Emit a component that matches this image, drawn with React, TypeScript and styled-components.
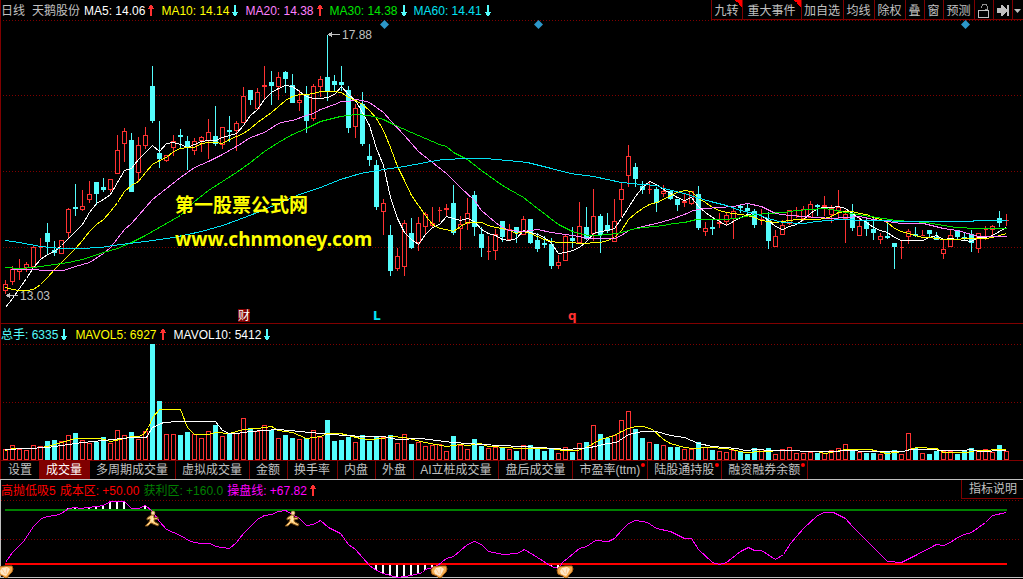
import React from "react";
import styled, { createGlobalStyle } from "styled-components";

const color = {
  line: "#800000",
  up: "#ff3232",
  down: "#54fcfc",
  text: "#c0c0c0",
  white: "#ffffff",
  yellow: "#ffff00",
  pink: "#ff80ff",
  green: "#00e600",
  sky: "#02e2f4",
  magenta: "#ff00ff",
  red: "#ff0000",
  darkGreen: "#008000",
  diamond: "#2c96c8",
};

const GlobalStyle = createGlobalStyle`
  *, *::before, *::after { box-sizing: border-box; }
  body {
    margin: 0;
    background: #000;
    color: ${color.text};
    font: 12px/20px "Liberation Sans", "Noto Sans CJK SC", sans-serif;
  }
`;

/* ---------- price data: [direction, high, low, body top, body bottom] ---------- */

type Candle = ["u" | "d", number, number, number, number];

const candles: Candle[] = [
  ["u", 280, 294, 284, 290], ["u", 266, 285, 269, 281], ["u", 259, 280, 269, 271], ["u", 262, 272, 264, 267],
  ["u", 245, 266, 247, 266], ["u", 238, 258, 247, 247], ["d", 223, 254, 233, 242], ["d", 241, 256, 250, 253],
  ["u", 240, 253, 240, 253], ["u", 208, 239, 209, 232], ["d", 184, 216, 207, 209], ["u", 190, 211, 206, 209],
  ["u", 181, 203, 194, 199], ["d", 182, 205, 182, 194], ["d", 178, 192, 187, 190], ["u", 179, 192, 179, 189],
  ["u", 135, 174, 150, 173], ["u", 128, 162, 131, 143], ["d", 133, 192, 140, 192], ["u", 137, 182, 145, 172],
  ["u", 127, 149, 135, 145], ["d", 66, 123, 86, 121], ["d", 121, 168, 153, 159], ["u", 155, 162, 155, 160],
  ["u", 135, 156, 141, 147], ["d", 129, 148, 135, 137], ["d", 136, 170, 141, 147], ["u", 138, 155, 141, 150],
  ["u", 136, 152, 137, 140], ["u", 119, 159, 132, 140], ["d", 106, 146, 136, 144], ["u", 127, 149, 127, 144],
  ["d", 116, 142, 130, 132], ["u", 121, 151, 123, 130], ["u", 87, 122, 96, 122], ["d", 90, 105, 90, 100],
  ["u", 88, 109, 92, 108], ["u", 66, 100, 85, 86], ["d", 71, 105, 82, 86], ["u", 72, 100, 77, 86],
  ["d", 71, 93, 72, 79], ["d", 74, 103, 85, 103], ["u", 90, 111, 100, 102], ["d", 86, 133, 95, 121],
  ["u", 84, 121, 86, 118], ["u", 76, 97, 79, 86], ["d", 35, 101, 77, 92], ["d", 75, 91, 81, 85],
  ["d", 66, 91, 82, 85], ["d", 86, 133, 90, 128], ["u", 104, 138, 108, 126], ["d", 92, 146, 104, 144],
  ["d", 144, 166, 156, 160], ["d", 160, 210, 165, 207], ["u", 199, 235, 203, 211], ["d", 225, 276, 235, 271],
  ["u", 248, 271, 256, 268], ["u", 220, 276, 223, 266], ["d", 218, 249, 233, 248], ["u", 217, 251, 223, 242],
  ["u", 212, 235, 214, 226], ["u", 207, 227, 223, 225], ["u", 207, 222, 210, 210], ["u", 204, 217, 208, 209],
  ["d", 185, 235, 203, 233], ["u", 216, 250, 224, 228], ["u", 198, 230, 213, 223], ["d", 191, 236, 195, 227],
  ["d", 227, 257, 234, 248], ["u", 236, 260, 251, 251], ["u", 229, 260, 234, 250], ["d", 221, 242, 221, 237],
  ["u", 224, 240, 229, 239], ["d", 227, 243, 227, 233], ["u", 216, 235, 219, 234], ["d", 219, 244, 219, 243],
  ["d", 233, 252, 240, 249], ["d", 236, 248, 243, 245], ["d", 238, 269, 244, 266], ["u", 255, 269, 262, 265],
  ["u", 234, 261, 236, 260], ["d", 227, 248, 238, 241], ["u", 202, 242, 226, 242], ["d", 207, 240, 227, 239],
  ["u", 189, 241, 216, 233], ["d", 214, 253, 216, 235], ["d", 213, 233, 225, 231], ["u", 199, 242, 221, 241],
  ["u", 183, 217, 189, 199], ["u", 145, 187, 156, 175], ["d", 163, 187, 167, 179], ["d", 181, 194, 186, 190],
  ["u", 181, 194, 189, 189], ["d", 187, 212, 189, 203], ["u", 185, 197, 191, 193], ["d", 190, 200, 191, 199],
  ["d", 199, 211, 199, 205], ["u", 193, 207, 201, 202], ["u", 191, 205, 191, 203], ["d", 186, 230, 194, 228],
  ["u", 222, 236, 228, 231], ["d", 220, 235, 227, 229], ["u", 213, 228, 222, 223], ["u", 212, 225, 215, 221],
  ["u", 207, 239, 211, 218], ["d", 205, 213, 206, 208], ["d", 204, 215, 208, 211], ["d", 209, 228, 211, 225],
  ["u", 209, 225, 219, 219], ["d", 212, 249, 220, 241], ["u", 230, 247, 236, 246], ["u", 220, 235, 225, 234],
  ["u", 210, 225, 210, 223], ["u", 207, 218, 215, 215], ["u", 206, 221, 209, 218], ["u", 201, 218, 204, 217],
  ["d", 204, 216, 205, 207], ["u", 196, 216, 205, 206], ["u", 205, 223, 208, 214], ["u", 190, 220, 207, 210],
  ["u", 210, 243, 214, 218], ["d", 204, 231, 213, 228], ["u", 217, 236, 226, 235], ["d", 219, 236, 222, 229],
  ["d", 217, 240, 229, 233], ["u", 233, 244, 236, 239], ["d", 222, 239, 236, 238], ["d", 243, 269, 243, 247],
  ["u", 240, 259, 247, 247], ["u", 229, 244, 231, 236], ["d", 227, 237, 234, 236], ["u", 230, 236, 235, 235],
  ["d", 230, 237, 230, 234], ["d", 232, 240, 237, 240], ["u", 239, 259, 249, 253], ["u", 230, 247, 235, 246],
  ["d", 230, 239, 230, 237], ["d", 233, 241, 237, 239], ["d", 230, 252, 234, 243], ["u", 233, 253, 233, 248],
  ["u", 226, 240, 229, 229], ["u", 225, 235, 226, 229], ["d", 211, 227, 218, 223], ["u", 214, 226, 220, 220],
];

const volumeTops = [
  449, 445, 449, 450, 445, 446, 441, 440, 441, 435, 433, 440, 443, 442, 437, 443, 430, 435, 432, 439, 431, 344, 401, 434,
  434, 435, 432, 434, 438, 431, 425, 436, 433, 433, 418, 428, 431, 425, 430, 438, 435, 438, 439, 438, 430, 437, 420, 441,
  440, 437, 442, 435, 441, 437, 437, 435, 443, 434, 444, 442, 446, 445, 444, 451, 436, 445, 449, 439, 446, 448, 447, 448,
  449, 451, 445, 445, 448, 451, 449, 453, 447, 452, 443, 442, 425, 434, 438, 435, 420, 411, 429, 438, 442, 444, 445, 447,
  447, 449, 449, 442, 447, 450, 451, 452, 450, 452, 454, 448, 449, 448, 454, 449, 447, 453, 453, 452, 453, 453, 450, 448,
  444, 449, 452, 453, 453, 454, 452, 450, 454, 433, 448, 453, 454, 451, 451, 451, 454, 451, 448, 450, 449, 452, 445, 451,
];

const ma5 = [
  307, 298, 288, 278, 267, 259, 254, 251, 245, 238, 231, 224, 212, 203, 199, 194, 182, 170, 168, 159, 152, 145, 151, 143,
  142, 144, 147, 144, 141, 140, 140, 137, 135, 133, 125, 115, 109, 99, 92, 88, 85, 86, 91, 96, 98, 98, 97, 94,
  86, 94, 100, 112, 125, 148, 165, 197, 218, 232, 239, 244, 234, 227, 224, 216, 218, 220, 218, 221, 229, 233, 235, 239,
  240, 238, 230, 232, 234, 237, 243, 253, 252, 250, 247, 241, 233, 231, 230, 228, 218, 207, 196, 187, 181, 184, 189, 193,
  197, 200, 197, 206, 212, 217, 221, 225, 221, 217, 214, 213, 215, 220, 226, 229, 226, 224, 219, 213, 208, 207, 207, 206,
  208, 213, 218, 222, 227, 230, 232, 237, 240, 240, 240, 240, 237, 235, 239, 238, 239, 240, 241, 237, 237, 235, 231, 227,
];

const ma10 = [
  287, 289, 290, 290, 289, 284, 277, 269, 262, 255, 248, 240, 231, 224, 219, 211, 202, 191, 185, 181, 172, 164, 160, 157,
  151, 148, 147, 147, 143, 142, 142, 143, 139, 136, 133, 128, 122, 117, 112, 106, 100, 96, 94, 94, 93, 91, 91, 91,
  92, 97, 100, 104, 110, 118, 130, 147, 166, 180, 195, 205, 215, 224, 228, 229, 231, 226, 222, 222, 222, 225, 227, 228,
  230, 233, 231, 233, 236, 239, 241, 242, 242, 242, 243, 243, 242, 242, 240, 237, 230, 219, 213, 208, 204, 202, 199, 195,
  192, 190, 191, 198, 202, 207, 210, 212, 213, 214, 215, 217, 220, 221, 222, 221, 220, 219, 219, 219, 219, 218, 216, 212,
  211, 211, 213, 214, 217, 219, 222, 228, 231, 233, 235, 237, 237, 238, 239, 239, 239, 238, 238, 238, 238, 237, 235, 233,
];

const ma20 =
  "10,269 33,269 43,270 63,270 75,266 89,262 103,253 110,247 117,238 124,229 131,223 138,215 145,207 152,199 166,188 180,177 194,167 208,161 222,154 236,146 250,137 264,132 278,123 285,121 292,120 306,115 313,113 320,109 334,104 341,101 348,101 355,99 362,100 369,102 376,107 383,112 390,120 404,135 418,151 432,162 446,173 460,187 474,200 481,210 495,222 502,227 509,230 523,231 537,229 551,232 565,234 579,236 586,238 614,238 621,235 628,230 635,228 642,226 656,223 670,219 684,214 693,210 705,208 719,207 733,206 747,203 761,206 775,213 789,215 803,216 817,217 831,218 845,217 859,216 873,219 887,221 901,223 923,223 943,228 957,230 971,234 978,236 1006,236";
const ma30 =
  "5,267 19,268 33,267 47,265 68,262 82,259 103,252 117,248 131,242 145,235 159,227 173,219 180,215 194,201 208,190 222,181 236,172 250,162 264,151 278,142 292,134 306,128 320,121 340,116 355,114 369,115 376,117 383,119 393,124 411,132 425,138 439,144 446,146 453,152 467,159 481,170 502,185 523,197 537,208 558,224 572,231 587,235 597,235 617,233 628,230 635,228 663,225 673,223 684,222 696,219 723,219 736,218 750,215 766,213 783,212 796,210 824,208 831,209 845,212 870,216 896,220 926,222 943,225 956,227 976,228 1006,228";
const ma60 =
  "5,240 19,242 40,246 61,248 80,248 100,247 120,244 145,241 173,237 187,234 201,231 222,225 236,220 257,212 278,203 299,194 320,187 340,179 360,173 383,169 404,166 425,162 443,159 467,158 485,158 507,160 527,162 547,167 570,173 593,176 621,182 642,184 656,185 663,188 684,193 696,197 710,201 726,205 740,210 754,213 768,218 782,222 803,223 816,221 840,219 866,220 916,221 970,221 976,220 1006,220";

const mavol5 =
  "5,450 12,448 33,448 47,446 61,442 75,438 100,438 110,441 124,438 131,436 138,436 143,434 148,427 152,417 159,409 180,409 187,427 194,434 208,434 215,432 229,433 243,429 257,428 271,426 278,430 292,432 306,438 320,436 327,433 340,433 360,438 369,439 383,438 390,436 404,437 425,442 446,446 460,444 467,445 480,443 488,446 509,447 516,448 551,448 563,450 577,450 586,447 593,443 600,439 607,437 614,435 621,431 628,428 635,426 643,426 652,429 663,439 670,443 684,447 693,448 708,447 726,448 745,452 763,451 783,450 816,451 825,453 845,449 870,449 886,453 903,451 916,447 936,448 943,452 966,452 976,450 1006,449";
const mavol10 =
  "5,449 47,447 61,445 82,442 103,440 131,437 146,437 152,427 163,422 178,421 215,421 222,430 229,433 236,433 250,431 278,429 310,432 330,434 362,436 370,436 383,436 397,439 420,438 453,442 481,444 540,447 567,449 590,447 607,443 616,442 628,434 642,431 656,431 670,435 684,437 698,443 712,446 736,448 745,450 756,449 770,450 796,450 803,451 831,451 848,450 866,451 903,451 910,449 962,450 971,449 978,451 1006,450";

const operation =
  "5,562 12,552 23,541 33,526 41,518 47,516 55,515 61,513 68,508 75,507 80,508 96,506 103,505 110,501 124,501 131,508 138,508 145,505 152,511 159,521 166,529 180,535 190,541 200,543 210,543 215,546 229,548 236,542 243,533 257,519 264,515 271,514 278,511 285,510 292,514 299,518 306,525 313,524 320,520 328,527 340,533 348,544 355,549 369,565 376,570 383,573 397,577 411,575 422,572 425,569 432,567 437,565 446,558 453,556 460,550 467,544 474,541 481,544 488,551 503,554 517,553 524,549 537,557 551,566 558,568 562,562 579,548 586,546 595,540 608,541 614,538 621,530 628,523 635,520 647,522 656,528 670,531 684,538 691,538 698,549 712,562 719,564 726,562 740,551 748,547 754,550 761,550 775,559 783,554 790,543 803,528 817,515 824,512 833,512 845,518 852,526 863,537 887,561 901,562 915,555 936,544 943,545 950,542 957,537 964,534 971,532 978,527 985,522 992,515 1006,512";

/* white bars where the curve leaves the band: [x, top, bottom] */
const breakouts = [
  [68, 508, 509], [75, 507, 509], [89, 507, 509], [96, 506, 509], [103, 505, 509], [110, 501, 509], [117, 501, 509],
  [124, 501, 509], [138, 508, 509], [145, 505, 509], [376, 565, 570], [383, 565, 573], [390, 565, 575], [397, 565, 577],
  [404, 565, 576], [411, 565, 575], [418, 565, 573], [425, 565, 570], [432, 565, 567], [551, 565, 566], [558, 565, 568],
];

const STEP = 7;
const FIRST = 5;
const xAt = (i: number) => FIRST + i * STEP;
const series = (ys: number[]) => ys.map((y, i) => `${xAt(i)},${y}`).join(" ");

/* ---------- layout ---------- */

const Page = styled.main`
  width: 100%;
  overflow: hidden;
`;

const Pane = styled.section<{ $edge: string }>`
  box-shadow: inset 1px 0 0 ${(p) => p.$edge};
`;

const PricePane = styled(Pane)`
  border-bottom: 1px solid ${color.line};
`;

const SignalPane = styled(Pane)`
  border-bottom: 1px solid ${color.text};
`;

const Header = styled.header`
  display: flex;
  height: 20px;
  padding-left: 1px;
  white-space: nowrap;
`;

const Legend = styled.div<{ $gap: number }>`
  display: flex;
  flex: 1 1 0;
  min-width: 0;
  overflow: hidden;
  gap: ${(p) => p.$gap}px;
  padding-top: 1px;
`;

const Title = styled.h1`
  display: flex;
  gap: 7px;
  margin: 0 -3px 0 0;
  font: inherit;
`;

const Value = styled.span<{ $color: string }>`
  display: flex;
  align-items: center;
  gap: 3px;
  color: ${(p) => p.$color};
`;

const Toolbar = styled.nav`
  display: flex;
  flex: none;
  border-bottom: 1px solid ${color.line};
`;

const ToolButton = styled.button<{ $width: number; $flag?: boolean }>`
  display: flex;
  align-items: center;
  justify-content: center;
  width: ${(p) => p.$width}px;
  padding: 2px 1px 0 0;
  border: 0;
  border-left: 1px solid ${color.line};
  background: ${(p) => (p.$flag ? "linear-gradient(45deg, transparent 50%, #ff0000 50%) top right / 7px 7px no-repeat" : "none")};
  color: inherit;
  font: inherit;
  line-height: 18px;
  white-space: nowrap;
  cursor: pointer;
`;

const Chart = styled.svg`
  display: block;
  width: 100%;
  height: auto;
  overflow: visible;
`;

const Tabs = styled.nav`
  display: flex;
  height: 20px;
  padding-left: 2px;
  border-top: 1px solid ${color.line};
  border-bottom: 1px solid ${color.text};
`;

const Tab = styled.button<{ $active?: boolean }>`
  position: relative;
  flex: none;
  padding: 1px 7px 0 6px;
  border: 0;
  border-right: 1px solid ${color.line};
  background: ${(p) => (p.$active ? color.line : "none")};
  color: ${(p) => (p.$active ? color.white : "inherit")};
  font: inherit;
  line-height: 17px;
  white-space: nowrap;
  cursor: pointer;
`;

const Dot = styled.i`
  position: absolute;
  top: 2px;
  right: 2px;
  width: 4px;
  height: 4px;
  border-radius: 50%;
  background: ${color.red};
`;

const HelpButton = styled.button`
  flex: none;
  height: 19px;
  padding: 1px 6px 0 7px;
  border: solid ${color.line};
  border-width: 0 0 1px 1px;
  background: none;
  color: inherit;
  font: inherit;
  line-height: 17px;
  cursor: pointer;
`;

/* ---------- pieces ---------- */

function Arrow({ dir }: { dir: "up" | "down" }) {
  return (
    <svg width="6" height="12" viewBox="0 0 6 12" shapeRendering="crispEdges" aria-hidden="true">
      <path
        d={dir === "up" ? "M2 0h2v1h1v2h1v1H4v7H2V4H0V3h1V1h1z" : "M2 0h2v7h2v1H5v2H4v1H2v-1H1V8H0V7h2z"}
        fill={dir === "up" ? color.up : color.down}
      />
    </svg>
  );
}

function Metric({ label, tone, dir }: { label: string; tone: string; dir?: "up" | "down" }) {
  return (
    <Value $color={tone}>
      {label}
      {dir && <Arrow dir={dir} />}
    </Value>
  );
}

function GridLine({ y, from = 3 }: { y: number; from?: number }) {
  return <path d={`M${from} ${y}.5H1021`} stroke={color.line} strokeDasharray="1 2" shapeRendering="crispEdges" />;
}

function Curve({ points, tone }: { points: string; tone: string }) {
  return (
    <polyline points={points} transform="translate(.5 .5)" fill="none" stroke={tone} shapeRendering="crispEdges" />
  );
}

function Candles() {
  return (
    <g shapeRendering="crispEdges">
      {candles.map(([dir, high, low, top, bottom], i) => {
        const x = xAt(i);
        return dir === "d" ? (
          <path key={i} fill={color.down} d={`M${x} ${high}h1V${low}h-1zM${x - 2} ${top}h5V${bottom}h-5z`} />
        ) : (
          <g key={i}>
            <path fill={color.up} d={`M${x} ${high}h1V${low}h-1z`} />
            <path stroke={color.up} fill="#000" d={`M${x - 2}.5 ${top}.5h4V${bottom}.5h-4z`} />
          </g>
        );
      })}
    </g>
  );
}

function Volumes() {
  return (
    <g shapeRendering="crispEdges">
      {volumeTops.map((top, i) =>
        candles[i][0] === "d" ? (
          <rect key={i} x={xAt(i) - 2} y={top} width="5" height={460 - top} fill={color.down} />
        ) : (
          <rect key={i} x={xAt(i) - 1.5} y={top + 0.5} width="4" height={459 - top} fill="#000" stroke={color.up} />
        ),
      )}
    </g>
  );
}

function Diamond({ x }: { x: number }) {
  return <path d={`M${x}.5 20l4.500 4.500-4.500 4.500-4.500-4.500z`} fill={color.diamond} />;
}

function Runner({ x }: { x: number }) {
  return (
    <g transform={`translate(${x} 511)`} strokeLinejoin="round">
      <path
        d="M-1 4L2 4L2 7L6 6L6 8L2 9L3 11L7 13L6 15L1 13L-1 12L-4 15L-7 15L-3 11L-2 8L-5 9L-5 7Z"
        fill="#ffd080"
        stroke="#7a4c14"
      />
      <path d="M0 5L1 5L1 11L-1 10Z" fill="#ffe8b0" />
      <circle cx="1" cy="2" r="2" fill="#ffdca0" stroke="#a87830" strokeWidth=".5" />
    </g>
  );
}

function Shell({ x }: { x: number }) {
  return (
    <g transform={`translate(${x} 566)`}>
      <path d="M-8 4L-6 1L0 0L7 0L8 3L7 6L4 9L2 12L0 12L-2 10L-7 8Z" fill="#f4ac50" stroke="#b06414" />
      <path d="M-5 5L-3 2L2 1L5 3L3 7L1 10L-4 8Z" fill="#ffe8c8" />
      <path d="M-3 3L0 8M2 2L1 8" stroke="#ffc890" />
    </g>
  );
}

function LockIcon() {
  return (
    <svg width="12" height="14" viewBox="0 0 12 14" fill="none" shapeRendering="crispEdges" aria-hidden="true">
      <path d="M3.500 4V2.500L5 .5H8L9.500 2.500V5.500H7.500V7" stroke="#909090" />
      <path d="M.5 6.500H10.500V13.500H.5Z" stroke={color.text} />
    </svg>
  );
}

function LatestIcon() {
  return (
    <svg width="12" height="11" viewBox="0 0 12 11" shapeRendering="crispEdges" aria-hidden="true">
      <path d="M0 3H4V0H5L10 5V0H12V11H10V6L5 11H4V8H0Z" fill={color.text} />
    </svg>
  );
}

function CaretIcon() {
  return (
    <svg width="7" height="4" viewBox="0 0 7 4" aria-hidden="true">
      <path d="M0 0H7L3.500 4Z" fill={color.text} />
    </svg>
  );
}

const tools = [
  { label: "九转", width: 31, flag: true },
  { label: "重大事件", width: 59, flag: true },
  { label: "加自选", width: 42 },
  { label: "均线", width: 31 },
  { label: "除权", width: 31 },
  { label: "叠", width: 19 },
  { label: "窗", width: 19 },
  { label: "预测", width: 31 },
];

const tabs = [
  { label: "设置" },
  { label: "成交量", active: true },
  { label: "多周期成交量" },
  { label: "虚拟成交量" },
  { label: "金额" },
  { label: "换手率" },
  { label: "内盘" },
  { label: "外盘" },
  { label: "AI立桩成交量" },
  { label: "盘后成交量" },
  { label: "市盈率(ttm)", dot: true },
  { label: "陆股通持股", dot: true },
  { label: "融资融券余额", dot: true },
];

export default function App() {
  return (
    <Page>
      <GlobalStyle />

      <PricePane $edge={color.line}>
        <Header>
          <Legend $gap={7}>
            <Title>
              <span>日线</span>
              <span>天鹅股份</span>
            </Title>
            <Metric label="MA5: 14.06" tone={color.white} dir="up" />
            <Metric label="MA10: 14.14" tone={color.yellow} dir="down" />
            <Metric label="MA20: 14.38" tone={color.pink} dir="up" />
            <Metric label="MA30: 14.38" tone={color.green} dir="down" />
            <Metric label="MA60: 14.41" tone={color.sky} dir="down" />
          </Legend>
          <Toolbar>
            {tools.map((t) => (
              <ToolButton key={t.label} type="button" $width={t.width} $flag={t.flag}>
                {t.label}
              </ToolButton>
            ))}
            <ToolButton type="button" $width={19} aria-label="锁定">
              <LockIcon />
            </ToolButton>
            <ToolButton type="button" $width={19} aria-label="最新">
              <LatestIcon />
            </ToolButton>
            <ToolButton type="button" $width={11} aria-label="更多">
              <CaretIcon />
            </ToolButton>
          </Toolbar>
        </Header>
        <Chart viewBox="0 20 1023 303" role="img" aria-label="天鹅股份 日线">
          {[20, 95, 171, 247].map((y) => (
            <GridLine key={y} y={y} />
          ))}
          <Candles />
          <Curve points={series(ma5)} tone={color.white} />
          <Curve points={series(ma10)} tone={color.yellow} />
          <Curve points={ma20} tone={color.pink} />
          <Curve points={ma30} tone={color.green} />
          <Curve points={ma60} tone={color.sky} />
          <Diamond x={384} />
          <Diamond x={538} />
          <Diamond x={965} />
          <g fill={color.text} fontSize="12">
            <path d="M328 34.500l4-3v2.500h8v1h-8v2.500z" shapeRendering="crispEdges" />
            <text x="342" y="39">17.88</text>
            <path d="M6 295.500l4-3v2.500h8v1h-8v2.500z" shapeRendering="crispEdges" />
            <text x="20" y="300">13.03</text>
          </g>
          <rect x="238" y="309" width="12" height="13" fill={color.line} />
          <text x="238" y="320" fontSize="12" fill={color.white}>财</text>
          <g fontFamily="DejaVu Sans, sans-serif" fontWeight="700" fontSize="12">
            <text x="373" y="320" fill={color.sky}>L</text>
            <text x="568" y="320" fill={color.up}>q</text>
          </g>
          <g fill={color.yellow} fontFamily="Noto Sans, Noto Sans CJK SC, sans-serif" fontWeight="700" fontSize="19">
            <text x="175" y="212">第一股票公式网</text>
            <text x="175" y="246">www.chnmoney.com</text>
          </g>
        </Chart>
      </PricePane>

      <Pane $edge={color.line}>
        <Header>
          <Legend $gap={8}>
            <Metric label="总手: 6335" tone={color.down} dir="down" />
            <Metric label="MAVOL5: 6927" tone={color.yellow} dir="up" />
            <Metric label="MAVOL10: 5412" tone={color.white} dir="down" />
          </Legend>
        </Header>
        <Chart viewBox="0 344 1023 116" role="img" aria-label="成交量">
          <GridLine y={344} />
          <GridLine y={402} />
          <Volumes />
          <Curve points={mavol5} tone={color.yellow} />
          <Curve points={mavol10} tone={color.white} />
        </Chart>
        <Tabs>
          {tabs.map((t) => (
            <Tab key={t.label} type="button" $active={t.active}>
              {t.label}
              {t.dot && <Dot />}
            </Tab>
          ))}
        </Tabs>
      </Pane>

      <SignalPane $edge={color.text}>
        <Header>
          <Legend $gap={4}>
            <Metric label="高抛低吸5" tone={color.red} />
            <Metric label="成本区: +50.00" tone={color.red} />
            <Metric label="获利区: +160.0" tone={color.darkGreen} />
            <Metric label="操盘线: +67.82" tone={color.magenta} dir="up" />
          </Legend>
          <HelpButton type="button">指标说明</HelpButton>
        </Header>
        <Chart viewBox="0 500 1023 77" role="img" aria-label="高抛低吸">
          <GridLine y={500} from={1} />
          <GridLine y={539} from={1} />
          <g shapeRendering="crispEdges">
            <rect x="5" y="509" width="1002" height="2" fill={color.darkGreen} />
            <rect x="5" y="563" width="1002" height="2" fill={color.red} />
            {breakouts.map(([x, top, bottom]) => (
              <rect key={x} x={x - 1} y={top} width="2" height={bottom - top} fill={color.white} />
            ))}
          </g>
          <Curve points={operation} tone={color.magenta} />
          <Runner x={152} />
          <Runner x={292} />
          <Shell x={5} />
          <Shell x={439} />
          <Shell x={565} />
        </Chart>
      </SignalPane>
    </Page>
  );
}
